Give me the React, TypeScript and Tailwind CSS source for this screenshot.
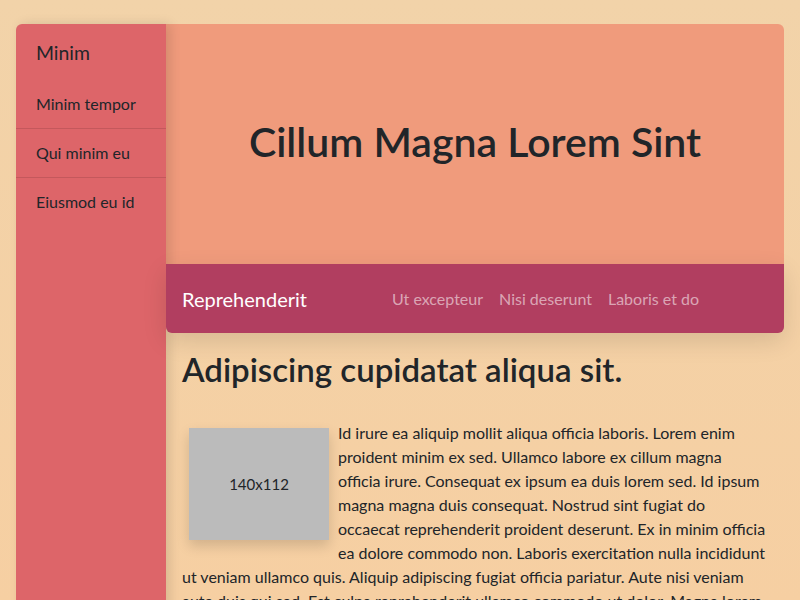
const sideItems = ["Minim tempor", "Qui minim eu", "Eiusmod eu id"]
const navLinks = ["Ut excepteur", "Nisi deserunt", "Laboris et do"]

const body =
    "Id irure ea aliquip mollit aliqua officia laboris. Lorem enim proident minim ex sed. Ullamco labore ex cillum magna officia irure. Consequat ex ipsum ea duis lorem sed. Id ipsum magna magna duis consequat. Nostrud sint fugiat do occaecat reprehenderit proident deserunt. Ex in minim officia ea dolore commodo non. Laboris exercitation nulla incididunt ut veniam ullamco quis. Aliquip adipiscing fugiat officia pariatur. Aute nisi veniam aute duis qui sed. Est culpa reprehenderit ullamco commodo ut dolor. Magna lorem esse cupidatat consectetur eiusmod."

export default function App() {
    return (
        <div className="h-[600px] overflow-hidden bg-gradient-to-b from-[#f2d3a9] to-[#f6cfa2] pt-6 pl-4 pr-4 font-['Lato',sans-serif] text-[#212529]">
            <div className="flex h-[620px]">
                <aside className="relative z-10 w-[150px] shrink-0 rounded-tl-md bg-[#dd6569] shadow-[4px_0_12px_rgba(0,0,0,0.12)]">
                    <div className="px-5 pt-[17px] pb-[15px] text-[19.4px] leading-6">Minim</div>
                    {sideItems.map((item, i) => (
                        <div
                            key={item}
                            className={`px-5 py-3 text-[16px] leading-6 ${i < sideItems.length - 1 ? "border-b border-[#c4585c]" : ""}`}
                        >
                            {item}
                        </div>
                    ))}
                </aside>

                <main className="flex-1">
                    <div className="flex h-[240px] items-center justify-center rounded-tr-md bg-[#f09b7c] pb-[4px]">
                        <h1 className="text-[41px] font-semibold leading-tight">Cillum Magna Lorem Sint</h1>
                    </div>
                    <nav className="relative z-10 flex h-[69px] items-center rounded-b-md bg-[#b13e60] px-4 shadow-[0_8px_24px_rgba(0,0,0,0.12)]">
                        <span className="text-[20px] text-white">Reprehenderit</span>
                        <div className="ml-[85px] flex gap-4 text-[16px] text-[rgba(255,255,255,0.55)]">
                            {navLinks.map((l) => (
                                <span key={l}>{l}</span>
                            ))}
                        </div>
                    </nav>
                    <section className="px-4 pt-[15px]">
                        <h2 className="text-[33px] font-semibold leading-[42px]">Adipiscing cupidatat aliqua sit.</h2>
                        <div className="mt-[31px] text-[16px] leading-6">
                            <div className="float-left mt-[7px] mb-[8px] ml-[7px] mr-[9px] flex h-[112px] w-[140px] items-center justify-center bg-[#bbbbbb] text-[15px] shadow-[0_6px_12px_rgba(0,0,0,0.15)]">
                                140x112
                            </div>
                            <p>{body}</p>
                        </div>
                    </section>
                </main>
            </div>
        </div>
    )
}
